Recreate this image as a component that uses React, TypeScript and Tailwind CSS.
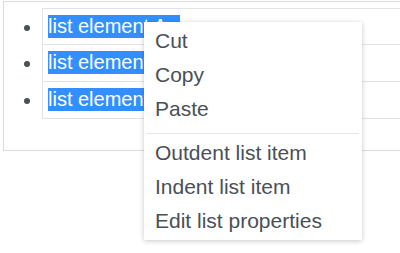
const items = ["list element A", "list element B", "list element C"];

const menu = [
  ["Cut", "Copy", "Paste"],
  ["Outdent list item", "Indent list item", "Edit list properties"],
];

function Row({ label, first }: { label: string; first: boolean }) {
  return (
    <div className="flex items-start">
      <div className={`w-[38px] shrink-0 pl-[20px] ${first ? "pt-[17px]" : "pt-[16px]"}`}>
        <div className="w-[6px] h-[6px] rounded-full bg-[#495057]" />
      </div>
      <div
        className={`flex-1 border-x border-b border-[#e3e3e3] pl-[5px] pt-[6px] ${
          first ? "border-t h-[37px]" : "h-[37px]"
        }`}
      >
        <span className="inline-block w-[132px] h-[23px] bg-[#338fff] text-white text-[20px] leading-[23px] whitespace-nowrap">
          {label}
        </span>
      </div>
    </div>
  );
}

export default function App() {
  return (
    <div
      className="relative w-[400px] h-[253px] overflow-hidden bg-white"
      style={{ fontFamily: '"Liberation Sans", Arial, sans-serif' }}
    >
      <div className="ml-[3px] mt-[1px] w-[460px] h-[150px] border border-[#dcdcdc] pt-[6px]">
        {items.map((label, i) => (
          <Row key={label} label={label} first={i === 0} />
        ))}
      </div>

      <div className="absolute left-[144px] top-[22px] w-[218px] bg-white py-[2px] shadow-[0_1px_5px_rgba(0,0,0,0.22)]">
        {menu.map((group, gi) => (
          <div key={gi}>
            {gi > 0 && <div className="mx-[3px] mt-[7px] mb-[2px] h-px bg-[#e6e6e6]" />}
            {group.map((label) => (
              <div
                key={label}
                className="h-[34px] pl-[11px] text-[21px] leading-[34px] text-[#495057] whitespace-nowrap"
              >
                {label}
              </div>
            ))}
          </div>
        ))}
      </div>
    </div>
  );
}
